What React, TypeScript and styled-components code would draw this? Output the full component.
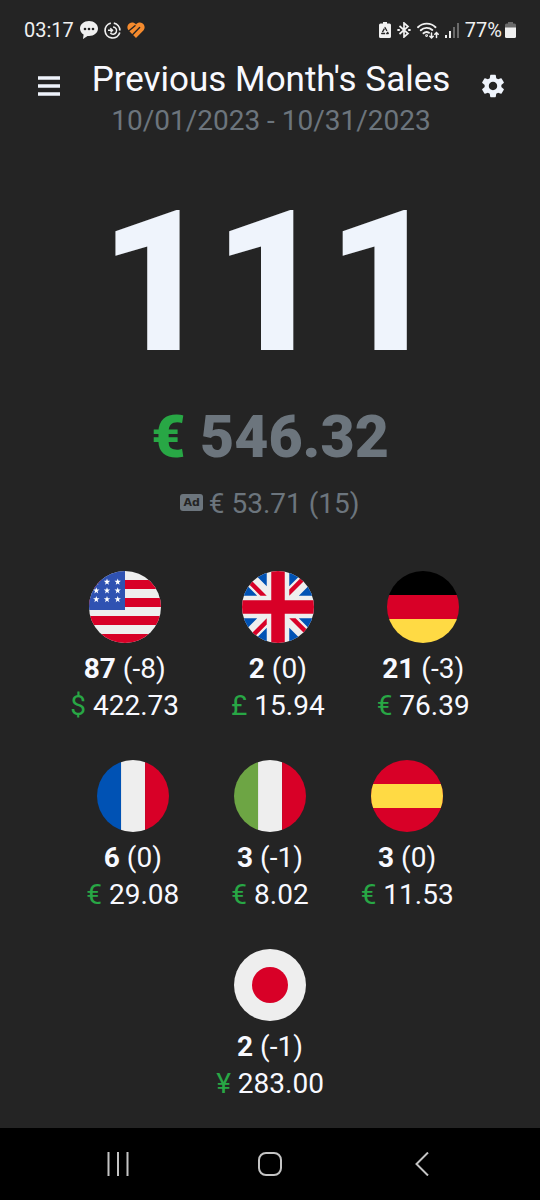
import React from "react";
import styled, { createGlobalStyle } from "styled-components";
import { MdSettings } from "react-icons/md";

const GlobalStyle = createGlobalStyle`
  *, *::before, *::after { box-sizing: border-box; }
  body {
    margin: 0;
    background: #242424;
    color: #f8f9ff;
    font-family: Roboto, "Liberation Sans", sans-serif;
  }
`;

const Screen = styled.div`
  display: flex;
  flex-direction: column;
  min-height: 100vh;
`;

const StatusBar = styled.div`
  display: flex;
  justify-content: space-between;
  padding: 18px 24px 0;
  font-size: 20px;
  line-height: 24px;
  color: #f0f0f0;
`;

const StatusGroup = styled.div<{ $gap: number }>`
  display: flex;
  align-items: center;
  gap: ${(p) => p.$gap}px;
  svg { display: block; }
`;

const Header = styled.header`
  display: flex;
  justify-content: space-between;
  padding: 16px 31px 0 33px;
`;

const IconButton = styled.button`
  display: flex;
  align-items: center;
  justify-content: center;
  width: 32px;
  height: 32px;
  margin-top: 12px;
  padding: 0;
  border: 0;
  background: none;
  color: #eff4fc;
  cursor: pointer;
`;

const Heading = styled.div`
  text-align: center;
`;

const Title = styled.h1`
  margin: 0;
  font-size: 35px;
  line-height: 44px;
  font-weight: 400;
`;

const DateRange = styled.p`
  margin: 0;
  font-size: 28px;
  line-height: 37px;
  color: #6c757d;
`;

const Main = styled.main`
  flex: 1;
  text-align: center;
`;

const Units = styled.div`
  margin-top: 28px;
  font-size: 196px;
  line-height: 232px;
  font-weight: 900;
  color: #eff4fc;
`;

const Revenue = styled.div`
  margin-top: 2px;
  font-size: 59px;
  line-height: 72px;
  font-weight: 900;
  color: #6c757d;
`;

const Currency = styled.span`
  color: #28a745;
`;

const AdRevenue = styled.div`
  display: flex;
  align-items: center;
  justify-content: center;
  gap: 6px;
  margin-top: 13px;
  font-size: 28px;
  line-height: 36px;
  color: #6c757d;
`;

const AdBadge = styled.span`
  margin-bottom: 4px;
  padding: 0 3px;
  border-radius: 3px;
  background: #6c757d;
  color: #242424;
  font: 700 11px/17px "DejaVu Sans", sans-serif;
`;

const Markets = styled.ul`
  display: flex;
  flex-wrap: wrap;
  justify-content: center;
  gap: 36px 52px;
  margin: 49px 0 0;
  padding: 0 60px;
  list-style: none;
`;

const Market = styled.li`
  display: flex;
  flex-direction: column;
  align-items: center;
  font-size: 28px;
  line-height: 37px;
`;

const FlagSvg = styled.svg`
  display: block;
  width: 72px;
  height: 72px;
  margin-bottom: 7px;
  border-radius: 50%;
`;

const NavBar = styled.nav`
  display: flex;
  height: 72px;
  padding: 0 42px;
  background: #000;
`;

const NavButton = styled.button`
  display: flex;
  flex: 1;
  align-items: center;
  justify-content: center;
  padding: 0;
  border: 0;
  background: none;
  color: #c4c4c4;
`;

const WHITE = "#eeeeee";
const RED = "#d80027";
const BLUE = "#0052b4";
const YELLOW = "#ffda44";

const STAR = "M0-24 6-8 23-8 9 3 14 20 0 10-14 20-9 3-23-8-6-8Z";

const flags: Record<string, React.ReactNode> = {
  us: (
    <>
      <path fill={WHITE} d="M0 0h512v512H0z" />
      <path fill={RED} d="M0 64h512v64H0zM0 192h512v64H0zM0 320h512v64H0zM0 448h512v64H0z" />
      <path fill="#2f52b2" d="M0 0h256v278H0z" />
      {[78, 140, 202].map((y) =>
        [52, 128, 204].map((x) => (
          <path key={`${x}-${y}`} fill="#fff" d={STAR} transform={`translate(${x} ${y})`} />
        ))
      )}
    </>
  ),
  gb: (
    <>
      <path fill={WHITE} d="M0 0h512v512H0z" />
      <path
        fill={BLUE}
        d="M336 0v108L444 0Zm176 68L404 176h108zM0 176h108L0 68ZM68 0l108 108V0Zm108 512V404L68 512ZM0 444l108-108H0Zm512-108H404l108 108Zm-68 176L336 404v108z"
      />
      <path
        fill={RED}
        d="M0 0v45l131 131h45L0 0zm208 0v208H0v96h208v208h96V304h208v-96H304V0h-96zm259 0L336 131v45L512 0h-45zM176 336 0 512h45l131-131v-45zm160 0 176 176v-45L381 336h-45z"
      />
    </>
  ),
  de: (
    <>
      <path fill="#000" d="M0 0h512v171H0z" />
      <path fill={RED} d="M0 171h512v171H0z" />
      <path fill={YELLOW} d="M0 342h512v170H0z" />
    </>
  ),
  fr: (
    <>
      <path fill={BLUE} d="M0 0h171v512H0z" />
      <path fill={WHITE} d="M171 0h171v512H171z" />
      <path fill={RED} d="M342 0h170v512H342z" />
    </>
  ),
  it: (
    <>
      <path fill="#6da544" d="M0 0h171v512H0z" />
      <path fill={WHITE} d="M171 0h171v512H171z" />
      <path fill={RED} d="M342 0h170v512H342z" />
    </>
  ),
  es: (
    <>
      <path fill={RED} d="M0 0h512v512H0z" />
      <path fill={YELLOW} d="M0 171h512v171H0z" />
    </>
  ),
  jp: (
    <>
      <path fill={WHITE} d="M0 0h512v512H0z" />
      <circle fill={RED} cx="256" cy="256" r="128" />
    </>
  ),
};

const markets = [
  { code: "us", name: "United States", units: 87, returns: "-8", symbol: "$", amount: "422.73" },
  { code: "gb", name: "United Kingdom", units: 2, returns: "0", symbol: "£", amount: "15.94" },
  { code: "de", name: "Germany", units: 21, returns: "-3", symbol: "€", amount: "76.39" },
  { code: "fr", name: "France", units: 6, returns: "0", symbol: "€", amount: "29.08" },
  { code: "it", name: "Italy", units: 3, returns: "-1", symbol: "€", amount: "8.02" },
  { code: "es", name: "Spain", units: 3, returns: "0", symbol: "€", amount: "11.53" },
  { code: "jp", name: "Japan", units: 2, returns: "-1", symbol: "¥", amount: "283.00" },
];

const ChatIcon = () => (
  <svg width="18" height="18" viewBox="0 0 18 18">
    <path fill="#f0f0f0" d="M9 0C4 0 0 3.300 0 7.500c0 2.500 1.400 4.700 3.600 6.100L3 18l4.500-3.100 1.500.1c5 0 9-3.300 9-7.500S14 0 9 0Z" />
    <g fill="#242424"><circle cx="5" cy="8" r="1.300" /><circle cx="9" cy="8" r="1.300" /><circle cx="13" cy="8" r="1.300" /></g>
  </svg>
);

const SwirlIcon = () => (
  <svg width="17" height="17" viewBox="0 0 17 17" fill="none" stroke="#f0f0f0" strokeWidth="1.700">
    <path d="M6.800 1.200A7.500 7.500 0 1 0 15.800 10.500M9.800 1.100a7.500 7.500 0 0 1 6.100 7.400" />
    <path d="M9 5a3.600 3.600 0 1 1-2.700 6M4 8.300h4.500M6.300 6.200 8.500 8.300 6.700 10.200" strokeWidth="1.500" />
  </svg>
);

const HeartIcon = () => (
  <svg width="18" height="16" viewBox="0 0 18 16">
    <path fill="#f58b2e" d="M9 2.500C7.300.4 4.600 0 2.700 1.200.2 2.800-.4 6 1.400 8.300L9 16l7.600-7.700C18.400 6 17.800 2.800 15.300 1.200 13.400 0 10.700.4 9 2.500Z" />
    <path fill="none" stroke="#242424" strokeWidth="1.400" strokeLinecap="round" d="M.8 9.800 8 3.800M5.800 12.400 12.600 5.600" />
  </svg>
);

const BatterySaverIcon = () => (
  <svg width="12" height="16" viewBox="0 0 12 16">
    <path fill="#f0f0f0" d="M4 0h4v1.500h2.500A1.500 1.500 0 0 1 12 3v11.500a1.500 1.500 0 0 1-1.500 1.500h-9A1.500 1.500 0 0 1 0 14.500V3a1.500 1.500 0 0 1 1.500-1.500H4Z" />
    <path fill="none" stroke="#242424" strokeWidth="1.300" strokeDasharray="4 1" d="M6 5.500 9.300 11.500H2.700Z" strokeLinejoin="round" />
  </svg>
);

const BluetoothIcon = () => (
  <svg width="14" height="16" viewBox="0 0 14 16" fill="none" stroke="#f0f0f0" strokeWidth="1.700">
    <path d="m2.500 4 8.500 7.500L7 15V1l4 3.500L2.500 12" />
    <path strokeLinecap="round" d="M1.200 8h.8M12 8h.8" strokeWidth="2.200" />
  </svg>
);

const WifiIcon = () => (
  <svg width="22" height="17" viewBox="0 0 22 17" fill="none" stroke="#f0f0f0" strokeWidth="1.900" strokeLinecap="round">
    <path d="M1 5.200a12.500 12.500 0 0 1 17.500 0M3.800 8.300a8.500 8.500 0 0 1 11.500-.3M6.500 11.300a4.500 4.500 0 0 1 5.500-.6" />
    <circle cx="9.600" cy="13.600" r=".5" />
    <path strokeWidth="1.500" d="M14.500 11v5m-1.700-1.700 1.700 1.700 1.700-1.700M19.500 15.500V10.500m-1.700 1.700 1.700-1.700 1.700 1.700" />
  </svg>
);

const SignalIcon = () => (
  <svg width="14" height="15" viewBox="0 0 14 15">
    <path fill="#f0f0f0" d="M0 12h2v3H0zM4 8h2v7H4z" />
    <path fill="#6a6a6a" d="M8 4h2v11H8zM12 0h2v15h-2z" />
  </svg>
);

const BatteryIcon = () => (
  <svg width="11" height="16" viewBox="0 0 11 16">
    <path fill="#6a6a6a" d="M3 0h5v1.500h1.500A1.500 1.500 0 0 1 11 3v3H0V3a1.500 1.500 0 0 1 1.500-1.500H3Z" />
    <path fill="#f0f0f0" d="M0 5.500h11v9A1.500 1.500 0 0 1 9.500 16h-8A1.500 1.500 0 0 1 0 14.500Z" />
  </svg>
);

export default function App() {
  return (
    <Screen>
      <GlobalStyle />
      <StatusBar>
        <StatusGroup $gap={6}>
          <span>03:17</span>
          <ChatIcon />
          <SwirlIcon />
          <HeartIcon />
        </StatusGroup>
        <StatusGroup $gap={6}>
          <BatterySaverIcon />
          <BluetoothIcon />
          <WifiIcon />
          <SignalIcon />
          <StatusGroup $gap={3}>
            <span>77%</span>
            <BatteryIcon />
          </StatusGroup>
        </StatusGroup>
      </StatusBar>

      <Header>
        <IconButton aria-label="Menu">
          <svg width="22" height="20" viewBox="0 0 22 20" fill="currentColor">
            <path d="M0 .3h22v3.400H0zM0 8.300h22v3.400H0zM0 16.300h22v3.400H0z" />
          </svg>
        </IconButton>
        <Heading>
          <Title>Previous Month's Sales</Title>
          <DateRange>10/01/2023 - 10/31/2023</DateRange>
        </Heading>
        <IconButton aria-label="Settings">
          <MdSettings size={28} />
        </IconButton>
      </Header>

      <Main>
        <Units>111</Units>
        <Revenue>
          <Currency>€</Currency> 546.32
        </Revenue>
        <AdRevenue>
          <AdBadge>Ad</AdBadge>
          <span>€ 53.71 (15)</span>
        </AdRevenue>
        <Markets>
          {markets.map((m) => (
            <Market key={m.code}>
              <FlagSvg viewBox="0 0 512 512" role="img" aria-label={m.name}>
                {flags[m.code]}
              </FlagSvg>
              <div>
                <b>{m.units}</b> ({m.returns})
              </div>
              <div>
                <Currency>{m.symbol}</Currency> {m.amount}
              </div>
            </Market>
          ))}
        </Markets>
      </Main>

      <NavBar>
        <NavButton aria-label="Recent apps">
          <svg width="22" height="24" viewBox="0 0 22 24" fill="none" stroke="currentColor" strokeWidth="2">
            <path d="M1.500 0v24M11 0v24M20.500 0v24" />
          </svg>
        </NavButton>
        <NavButton aria-label="Home">
          <svg width="24" height="24" viewBox="0 0 24 24" fill="none" stroke="currentColor" strokeWidth="2">
            <rect x="1" y="1" width="22" height="22" rx="7" />
          </svg>
        </NavButton>
        <NavButton aria-label="Back">
          <svg width="14" height="24" viewBox="0 0 14 24" fill="none" stroke="currentColor" strokeWidth="2">
            <path d="M13 .5 1.500 12 13 23.500" />
          </svg>
        </NavButton>
      </NavBar>
    </Screen>
  );
}
